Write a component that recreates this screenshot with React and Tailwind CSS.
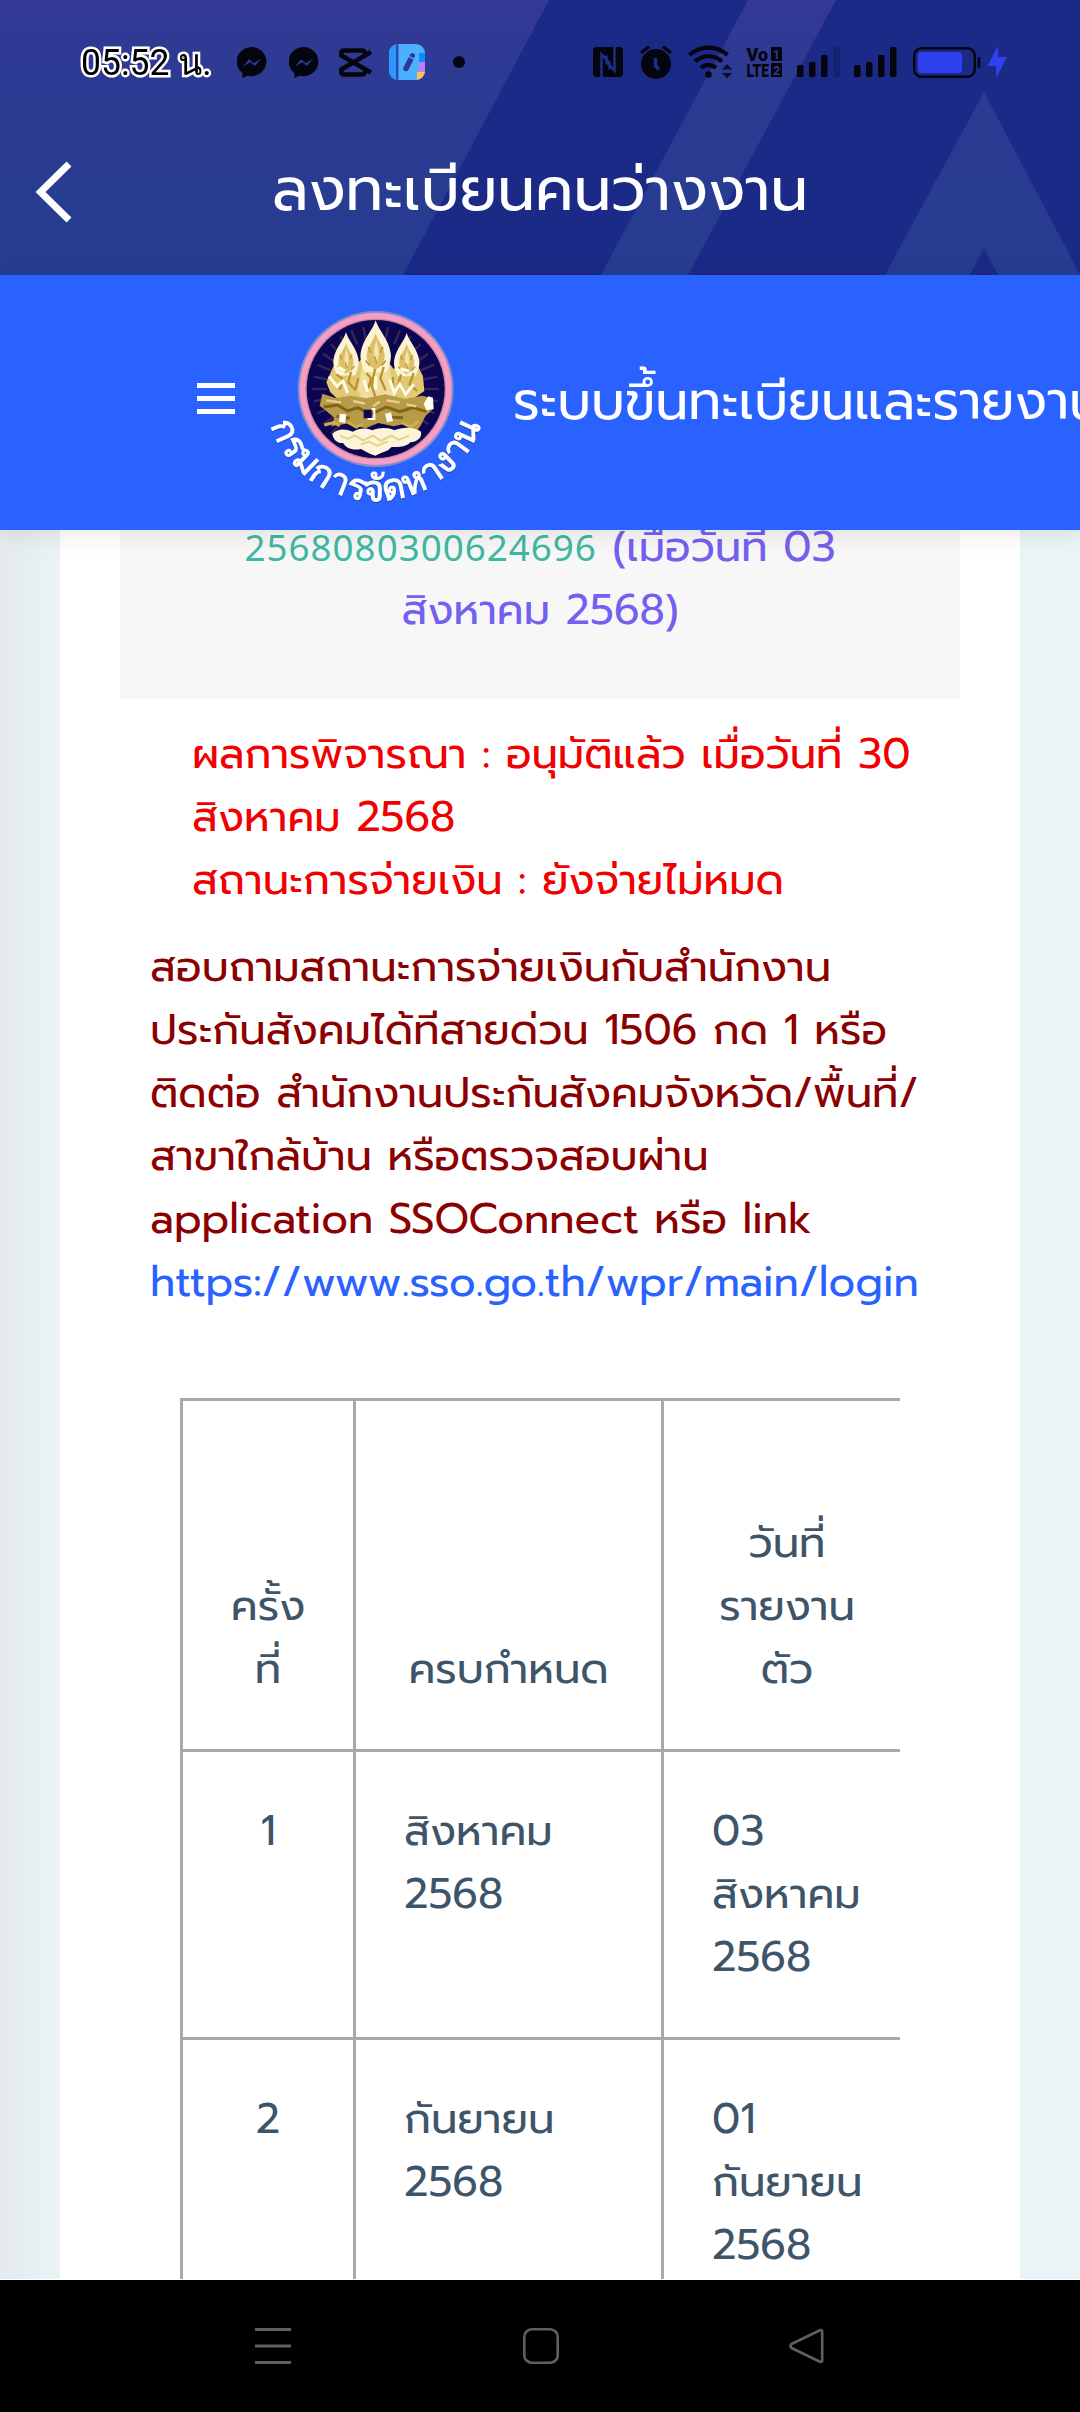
import React from 'react';

const rows = [
  { no: 1, due: ['สิงหาคม', '2568'], report: ['03', 'สิงหาคม', '2568'] },
  { no: 2, due: ['กันยายน', '2568'], report: ['01', 'กันยายน', '2568'] },
];

const Lines = ({ items }) =>
  items.map((item) => (
    <span key={item} className="block whitespace-nowrap">
      {item}
    </span>
  ));

const MessengerIcon = () => (
  <svg width="30" height="31" viewBox="0 0 30 31">
    <path d="M15 0a15 14.6 0 1 1-4.500 28.700L5.500 31V26.200A15 14.600 0 0 1 15 0z" fill="#04050f" />
    <path d="M6 19.500l6-7.300 4.700 4 7.300-4.500-6 7.300-4.800-3.800z" fill="#2d3a93" />
  </svg>
);

const CapCutIcon = () => (
  <svg width="33" height="29" viewBox="0 0 33 29" fill="none" stroke="#04050f" strokeWidth="4.500">
    <path d="M26 7V5a2.500 2.500 0 0 0-2.500-2.500H4.500A2.500 2.500 0 0 0 2.300 5v2.500L32 24.500M26 21.500V24a2.500 2.500 0 0 1-2.500 2.500H4.500A2.500 2.500 0 0 1 2.300 24v-2.500L32 4" />
  </svg>
);

const NotebookIcon = () => (
  <svg width="36" height="36" viewBox="0 0 36 36">
    <clipPath id="book">
      <rect width="36" height="36" rx="9" />
    </clipPath>
    <g clipPath="url(#book)">
      <rect width="36" height="36" fill="#4db0ff" />
      <rect width="7" height="36" fill="#2f94fb" />
      <rect x="7" width="2.500" height="36" fill="#2a4fae" />
      <rect x="30" y="9" width="6" height="9" fill="#0b8bff" />
      <rect x="30" y="18" width="6" height="10" fill="#c67bf7" />
      <rect x="28" y="28" width="8" height="8" fill="#ffbe55" />
      <path d="M17 24.500l4.800-9.500" stroke="#2b3b93" strokeWidth="5.500" strokeLinecap="round" />
      <path d="M22.800 12.700l.6-1" stroke="#2b3b93" strokeWidth="5" strokeLinecap="round" />
      <path d="M20 12.500l5.500 2.800" stroke="#4db0ff" strokeWidth="1.300" />
    </g>
  </svg>
);

// Everything right of the clock: NFC, alarm, wifi, VoLTE, two SIMs, battery
const SystemIcons = () => (
  <svg width="415" height="36" viewBox="593 44 415 36" fill="#04050f">
    <rect x="593" y="47" width="30" height="30" rx="3.500" />
    <path d="M601.500 77V54.500l8 8v7M614.500 47v23.500l-8-8v-7" fill="none" stroke="#1f2d89" strokeWidth="2.500" />

    <circle cx="656" cy="64" r="15" />
    <path d="M641 53l8-6.500M671 53l-8-6.500" stroke="#04050f" strokeWidth="3.500" />
    <path d="M655.500 58v7.500l3.500 4" fill="none" stroke="#1f2e8a" strokeWidth="3.500" />

    <g fill="none" stroke="#04050f" strokeWidth="4.200">
      <path d="M689.500 55a28 28 0 0 1 38 0" />
      <path d="M695 61.500a20 20 0 0 1 27 0" />
      <path d="M701 68a11.500 11.500 0 0 1 15 0" />
    </g>
    <circle cx="708.500" cy="74.500" r="3.200" />
    <path d="M722 69.500l5-5.500 5 5.500zM722 73l5 5.500 5-5.500z" fillOpacity=".8" />

    <g className="font-[Roboto,sans-serif] font-black" fontSize="19">
      <text x="746.500" y="60.700" textLength="21.500" lengthAdjust="spacingAndGlyphs">Vo</text>
      <text x="746.500" y="77" textLength="22.500" lengthAdjust="spacingAndGlyphs">LTE</text>
    </g>
    <rect x="771" y="47" width="11" height="14" rx="1" />
    <rect x="771" y="63" width="11" height="14" rx="1" />
    <g className="font-[Roboto,sans-serif] font-bold" fontSize="12.500" fill="#2d3a93" textAnchor="middle">
      <text x="776.300" y="58.500">1</text>
      <text x="776.500" y="74.500">2</text>
    </g>

    <rect x="797" y="65" width="6.500" height="12" rx="1.500" />
    <rect x="809" y="62" width="6.500" height="15" rx="1.500" />
    <rect x="821" y="55" width="6.500" height="22" rx="1.500" />
    <rect x="833.500" y="47" width="6.500" height="30" rx="1.500" fillOpacity=".2" />
    <rect x="854" y="65" width="6.500" height="12" rx="1.500" />
    <rect x="866" y="62" width="6.500" height="15" rx="1.500" />
    <rect x="878" y="55" width="6.500" height="22" rx="1.500" />
    <rect x="890" y="47" width="6.500" height="30" rx="1.500" />

    <rect x="914.200" y="48.200" width="60.600" height="28.600" rx="7.500" fill="none" stroke="#04050f" strokeWidth="2.400" />
    <rect x="918" y="52" width="44" height="21" rx="3.500" fill="#3140ee" />
    <rect x="977.500" y="57" width="2.800" height="11" rx="1.400" />
    <path d="M997 47L987.500 66h8.500l.5 11.500L1007 57h-8.500l-.5-10z" fill="#3140ee" />
  </svg>
);

const StatusBar = () => (
  <div className="flex h-[124px] items-center pl-[81px]">
    <div className="w-[156px] whitespace-nowrap font-[Roboto,sans-serif] text-[37px] leading-none font-normal text-black [-webkit-text-stroke:5px_white] [paint-order:stroke_fill]">
      <span className="inline-block origin-left scale-x-96">05:52 น.</span>
    </div>
    <div className="flex w-[356px] items-center">
      <MessengerIcon />
      <span className="w-[22px]" />
      <MessengerIcon />
      <span className="w-[20px]" />
      <CapCutIcon />
      <span className="w-[17px]" />
      <NotebookIcon />
      <span className="ml-[28px] size-3 rounded-full bg-[#04050f]" />
    </div>
    <SystemIcons />
  </div>
);

const AppBar = () => (
  <div className="relative h-[275px] overflow-hidden bg-[#1b2a87]">
    <svg className="absolute inset-0" width="1080" height="275" viewBox="0 0 1080 275">
      <defs>
        <linearGradient id="stripe" gradientUnits="userSpaceOnUse" x1="0" y1="0" x2="0" y2="275">
          <stop offset="0" stopColor="#333994" />
          <stop offset=".4" stopColor="#2a3b92" />
          <stop offset="1" stopColor="#263d90" />
        </linearGradient>
      </defs>
      <g fill="url(#stripe)">
        <path d="M0 0H549L403 275H0z" />
        <path d="M748 0h88L688 275h-87z" />
        <path d="M984 92l96 183h-82l-14-27-14 27h-85z" />
      </g>
    </svg>
    <div className="relative">
      <StatusBar />
      <div className="flex h-[135px] items-center">
        <svg className="ml-[34px]" width="40" height="64" viewBox="0 0 40 64" fill="none" stroke="white" strokeWidth="7">
          <path d="M35 4L6.500 32l28.500 28" />
        </svg>
        <h1 className="mr-[74px] mb-[4px] flex-1 text-center text-[60px] leading-none text-white">ลงทะเบียนคนว่างงาน</h1>
      </div>
    </div>
  </div>
);

const rays = Array.from({ length: 32 }, (_, i) => i * 11.25);

const Crown = ({ x, y, s }) => (
  <g transform={`translate(${x} ${y}) scale(${s})`}>
    <path d="M0 0C8 28 36 52 42 92C44 112 36 130 30 144H-30C-36 130-44 112-42 92C-36 52-8 28 0 0z" fill="#fbf3d2" />
    <path d="M0 36C6 60 26 74 25 102C22 122 12 130 0 138C-12 130-22 122-25 102C-26 74-6 60 0 36z" fill="#dcc068" />
    <path d="M-4 76l6-22 8 34-6 34-10-16z" fill="#f3e3a8" />
    <path d="M-28 112l12 14M28 112l-12 14M-20 74l6 16M20 74l-8 16M-4 100l8 20" stroke="#b99a3e" strokeWidth="5" />
  </g>
);

const Emblem = () => (
  <svg width="224" height="201" viewBox="310 85 672 603">
    <circle cx="648" cy="328" r="234" fill="#8490c8" />
    <circle cx="648" cy="328" r="228" fill="#f79cc4" />
    <circle cx="648" cy="328" r="211" fill="#c08a9c" />
    <circle cx="648" cy="328" r="207" fill="#0d0552" />
    <g stroke="#33284f" strokeWidth="7">
      {rays.map((a) => (
        <path key={a} d="M648 182V138" transform={`rotate(${a} 648 328)`} />
      ))}
    </g>
    {/* bodies */}
    <path d="M520 262l-20 46 12 30 22 20h226l34-24-4-44-18-36-50-6-20 20-20-26-60-16-32 26-24-16z" fill="#e2c874" />
    <path d="M612 236h74l10 60 10 64-96 10-16-40z" fill="#f0dc9a" />
    <Crown x={559} y={158} s={0.9} />
    <Crown x={741} y={160} s={0.9} />
    <Crown x={648} y={122} s={1.08} />
    <path d="M646 268l-10 50 12 36M620 280l14 16-8 30M672 262l-10 34 16 36M530 284l20 14-10 32M574 276l-8 32 22 24M724 284l-8 30 20 22M762 280l-12 34 22 20M596 296l-8 32M700 292l-2 38" stroke="#b8952f" strokeWidth="7" fill="none" />
    <path d="M508 290l24 30 18-16 14 36M612 300l12 36M690 300l14 40 16-26 18 30 24-30M648 290v40M536 262l20 12M722 268l26 6" stroke="#fffbe6" strokeWidth="9" fill="none" />
    {/* mounts */}
    <path d="M488 342l42 14 42-8 48 8 56-12 60 14 52-10 24 6 8 34-22 20-14 28-14 20-34-24-34 8-46-10-38 16-58-14-46 8 10-26-24-20-20-16z" fill="#b79b46" />
    <path d="M492 382l42-6 30 18 30-10 40 20 46-22 40 14 40-12 40 12M530 410l40 6M680 412l50 2" stroke="#80651c" strokeWidth="9" fill="none" />
    <path d="M500 362l44 6M580 364l36 8M680 362l40 6M640 380l20-14M740 374l30 6" stroke="#e6d08a" strokeWidth="7" />
    <path d="M792 372l14-22 14 4 2 34-22 4zM540 402l20 2-4 26-18-4zM676 402l18-4 6 26-18 4z" fill="#fffdf2" />
    <path d="M612 390h24v26h-24z" fill="#0d0552" />
    <path d="M636 388h8v30h-20" fill="none" stroke="#fff" strokeWidth="6" />
    <path d="M494 436l30-8 16 10M566 428l24 14 20-10M726 428l26 14 26-18" stroke="#cdae4a" strokeWidth="9" fill="none" />
    {/* cloud base */}
    <path d="M518 462c20-20 46-12 62-6 20-12 40-12 58-4 24-10 50-8 66 0 22-10 60-12 80 4 4 20-14 30-32 32-14 16-38 14-56 14-16 16-32 16-48 26-20-4-30-14-44-20-26 6-46-4-54-18-20 0-30-12-32-28z" fill="#fcf5da" />
    <path d="M542 468l22 10 22-10 24 14 30-14 24 16 30-16 24 12 30-12M604 494l24-8 24 12 32-12" stroke="#e6d08c" strokeWidth="6" fill="none" />
    <path id="arc" d="M322 394A332 332 0 0 0 974 394" fill="none" />
    <text className="font-['Noto_Sans',sans-serif] font-bold drop-shadow-[0_3px_1px_rgba(20,50,140,0.6)]" fontSize="108" fill="white">
      <textPath href="#arc" startOffset="50%" textAnchor="middle">
        กรมการจัดหางาน
      </textPath>
    </text>
  </svg>
);

const SiteHeader = () => (
  <header className="relative z-10 flex h-[255px] bg-[#2962ff] pl-[197px] shadow-[0_3px_24px_rgba(0,0,0,0.1)]">
    <div className="mt-[108px] flex h-[31px] w-[38px] shrink-0 flex-col justify-between">
      <span className="h-[5px] bg-white" />
      <span className="h-[5px] bg-white" />
      <span className="h-[5px] bg-white" />
    </div>
    <div className="mt-[33px] ml-[28px] shrink-0">
      <Emblem />
    </div>
    <div className="mt-[87px] ml-[26px] text-[52.5px] leading-[79px] whitespace-nowrap text-white">
      ระบบขึ้นทะเบียนและรายงาน
    </div>
  </header>
);

const ReportTable = () => (
  <div className="mx-[60px] mt-[84px] overflow-hidden">
    <table className="w-[1200px] table-fixed border-collapse text-[#3e5569]">
      <colgroup>
        <col className="w-[173px]" />
        <col className="w-[308px]" />
        <col className="w-[249px]" />
        <col />
      </colgroup>
      <thead>
        <tr className="h-[351px] align-bottom">
          <th className="border-[3px] border-[#a9a9a9] pb-[48px] font-normal">
            <Lines items={['ครั้ง', 'ที่']} />
          </th>
          <th className="border-[3px] border-[#a9a9a9] pb-[48px] font-normal">ครบกำหนด</th>
          <th className="border-[3px] border-[#a9a9a9] pb-[48px] font-normal">
            <Lines items={['วันที่', 'รายงาน', 'ตัว']} />
          </th>
          <th className="border-[3px] border-[#a9a9a9]" />
        </tr>
      </thead>
      <tbody>
        {rows.map((row) => (
          <tr key={row.no} className="h-[288px] align-top">
            <td className="border-[3px] border-[#a9a9a9] pt-[48px] text-center">{row.no}</td>
            <td className="border-[3px] border-[#a9a9a9] pt-[48px] pl-[48px]">
              <Lines items={row.due} />
            </td>
            <td className="border-[3px] border-[#a9a9a9] pt-[48px] pl-[48px]">
              <Lines items={row.report} />
            </td>
            <td className="border-[3px] border-[#a9a9a9]" />
          </tr>
        ))}
      </tbody>
    </table>
  </div>
);

const NavBar = () => (
  <nav className="flex h-[132px] items-center bg-black pl-[255px]">
    <svg width="36" height="36" viewBox="0 0 36 36" stroke="#5f5f5f" strokeWidth="3">
      <path d="M0 1.500h36M0 18h36M0 34.500h36" />
    </svg>
    <svg className="ml-[232px]" width="36" height="36" viewBox="0 0 36 36" fill="none" stroke="#5f5f5f" strokeWidth="2.600">
      <rect x="1.300" y="1.300" width="33.400" height="33.400" rx="7.500" />
    </svg>
    <svg className="ml-[230px]" width="36" height="36" viewBox="0 0 36 36" fill="none" stroke="#5f5f5f" strokeWidth="2.600" strokeLinejoin="round">
      <path d="M31.500 2L2.500 16q-2 2 0 4l29 14q1.700 0 1.700-2V4q0-2-1.700-2z" />
    </svg>
  </nav>
);

export default function App() {
  return (
    <div className="flex h-[2412px] w-[1080px] flex-col overflow-hidden bg-white font-['Prompt','Noto_Sans_Thai','Noto_Sans',sans-serif]">
      <AppBar />
      <SiteHeader />
      <main className="h-[1749px] overflow-hidden bg-linear-to-r from-[#e4eaee] to-[#eaf3f6] to-[60px] px-[60px]">
        <div className="h-full bg-white px-[60px] text-[42px] leading-[63px]">
          <div className="h-[169px] overflow-hidden bg-[#f7f7f7] text-center text-[#7460ee]">
            <p className="-mt-[14px] whitespace-nowrap">
              <span className="font-['Noto_Sans',sans-serif] text-[36.75px] tracking-[1px] text-[#3fb8a1]">
                2568080300624696
              </span>{' '}
              (เมื่อวันที่ 03
              <br />
              สิงหาคม 2568)
            </p>
          </div>
          <p className="mt-[24px] pl-[72px] whitespace-nowrap text-[#f00000]">
            ผลการพิจารณา : อนุมัติแล้ว เมื่อวันที่ 30
            <br />
            สิงหาคม 2568
            <br />
            สถานะการจ่ายเงิน : ยังจ่ายไม่หมด
          </p>
          <p className="mt-[24px] pl-[30px] whitespace-nowrap text-[#8b0000]">
            สอบถามสถานะการจ่ายเงินกับสำนักงาน
            <br />
            ประกันสังคมได้ทีสายด่วน 1506 กด 1 หรือ
            <br />
            ติดต่อ สำนักงานประกันสังคมจังหวัด/พื้นที่/
            <br />
            สาขาใกล้บ้าน หรือตรวจสอบผ่าน
            <br />
            application SSOConnect หรือ link
            <br />
            <a className="text-[#2962ff]">https://www.sso.go.th/wpr/main/login</a>
          </p>
          <ReportTable />
        </div>
      </main>
      <div className="h-px bg-white" />
      <NavBar />
    </div>
  );
}
